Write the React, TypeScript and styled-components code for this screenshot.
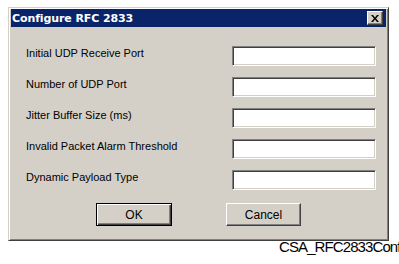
import React from 'react';
import styled, { createGlobalStyle } from 'styled-components';

const fields = [
  'Initial UDP Receive Port',
  'Number of UDP Port',
  'Jitter Buffer Size (ms)',
  'Invalid Packet Alarm Threshold',
  'Dynamic Payload Type',
];

export default function App() {
  return (
    <>
      <GlobalStyle />
      <StyledPage>
        <StyledDialog>
          <StyledTitleBar>
            <StyledTitle>Configure RFC 2833</StyledTitle>
            <StyledClose>
              <svg width="8" height="7" viewBox="0 0 8 7">
                <path d="M0 0h2l2 2.5L6 0h2L5 3.5 8 7H6L4 4.5 2 7H0l3-3.5z" fill="#000" />
              </svg>
            </StyledClose>
          </StyledTitleBar>
          <StyledForm>
            {fields.map((label) => (
              <StyledRow key={label}>
                <StyledLabel>{label}</StyledLabel>
                <StyledInput />
              </StyledRow>
            ))}
          </StyledForm>
          <StyledButtons>
            <StyledButton $default>OK</StyledButton>
            <StyledButton>Cancel</StyledButton>
          </StyledButtons>
        </StyledDialog>
        <StyledCaption>CSA_RFC2833Conf</StyledCaption>
      </StyledPage>
    </>
  );
}

const GlobalStyle = createGlobalStyle`
  html, body {
    margin: 0;
    padding: 0;
    background: #ffffff;
    overflow: hidden;
  }
`;

const StyledPage = styled.div`
  width: 399px;
  height: 264px;
  overflow: hidden;
  padding: 7px 0 0 8px;
  box-sizing: border-box;
  font-family: 'Liberation Sans', Arial, sans-serif;
`;

const StyledDialog = styled.div`
  width: 381px;
  height: 234px;
  box-sizing: border-box;
  background: #d4d0c8;
  border-top: 1px solid #d4d0c8;
  border-left: 1px solid #d4d0c8;
  border-right: 1px solid #404040;
  border-bottom: 1px solid #404040;
  box-shadow: inset 1px 1px 0 #ffffff, inset -1px -1px 0 #808080;
  padding: 1px 2px 2px 2px;
  display: flex;
  flex-direction: column;
`;

const StyledTitleBar = styled.div`
  height: 18px;
  background: #0a246a;
  display: flex;
  align-items: center;
  justify-content: space-between;
  padding: 0 3px 0 1px;
`;

const StyledTitle = styled.span`
  color: #ffffff;
  font-family: 'DejaVu Sans', Verdana, sans-serif;
  font-weight: bold;
  font-size: 11px;
  letter-spacing: -0.1px;
`;

const StyledClose = styled.div`
  width: 16px;
  height: 14px;
  box-sizing: border-box;
  background: #d4d0c8;
  border-top: 1px solid #ffffff;
  border-left: 1px solid #ffffff;
  border-right: 1px solid #404040;
  border-bottom: 1px solid #404040;
  box-shadow: inset -1px -1px 0 #808080;
  display: flex;
  align-items: center;
  justify-content: center;
`;

const StyledForm = styled.div`
  display: flex;
  flex-direction: column;
  padding: 19px 0 0 15px;
`;

const StyledRow = styled.div`
  display: grid;
  grid-template-columns: 206px 144px;
  height: 31px;
  align-items: start;
`;

const StyledLabel = styled.span`
  font-size: 11px;
  line-height: 14px;
  color: #000000;
`;

const StyledInput = styled.div`
  height: 20px;
  box-sizing: border-box;
  background: #ffffff;
  border-top: 1px solid #808080;
  border-left: 1px solid #808080;
  border-right: 1px solid #ffffff;
  border-bottom: 1px solid #ffffff;
  box-shadow: inset 1px 1px 0 #404040, inset -1px -1px 0 #d4d0c8;
`;

const StyledButtons = styled.div`
  display: flex;
  gap: 54px;
  padding: 2px 0 0 85px;
`;

const StyledButton = styled.div<{ $default?: boolean }>`
  width: ${({ $default }) => ($default ? '76px' : '75px')};
  height: 23px;
  box-sizing: border-box;
  display: flex;
  align-items: center;
  justify-content: center;
  font-size: 12px;
  color: #000000;
  background: #d4d0c8;
  border: 1px solid ${({ $default }) => ($default ? '#000000' : '#ffffff')};
  ${({ $default }) =>
    $default
      ? 'box-shadow: inset 1px 1px 0 #ffffff, inset -1px -1px 0 #404040, inset -2px -2px 0 #808080;'
      : 'border-right-color: #404040; border-bottom-color: #404040; box-shadow: inset -1px -1px 0 #808080;'}
`;

const StyledCaption = styled.div`
  margin: -3px 0 0 271px;
  font-size: 15px;
  letter-spacing: -0.9px;
  color: #000000;
  white-space: nowrap;
`;
